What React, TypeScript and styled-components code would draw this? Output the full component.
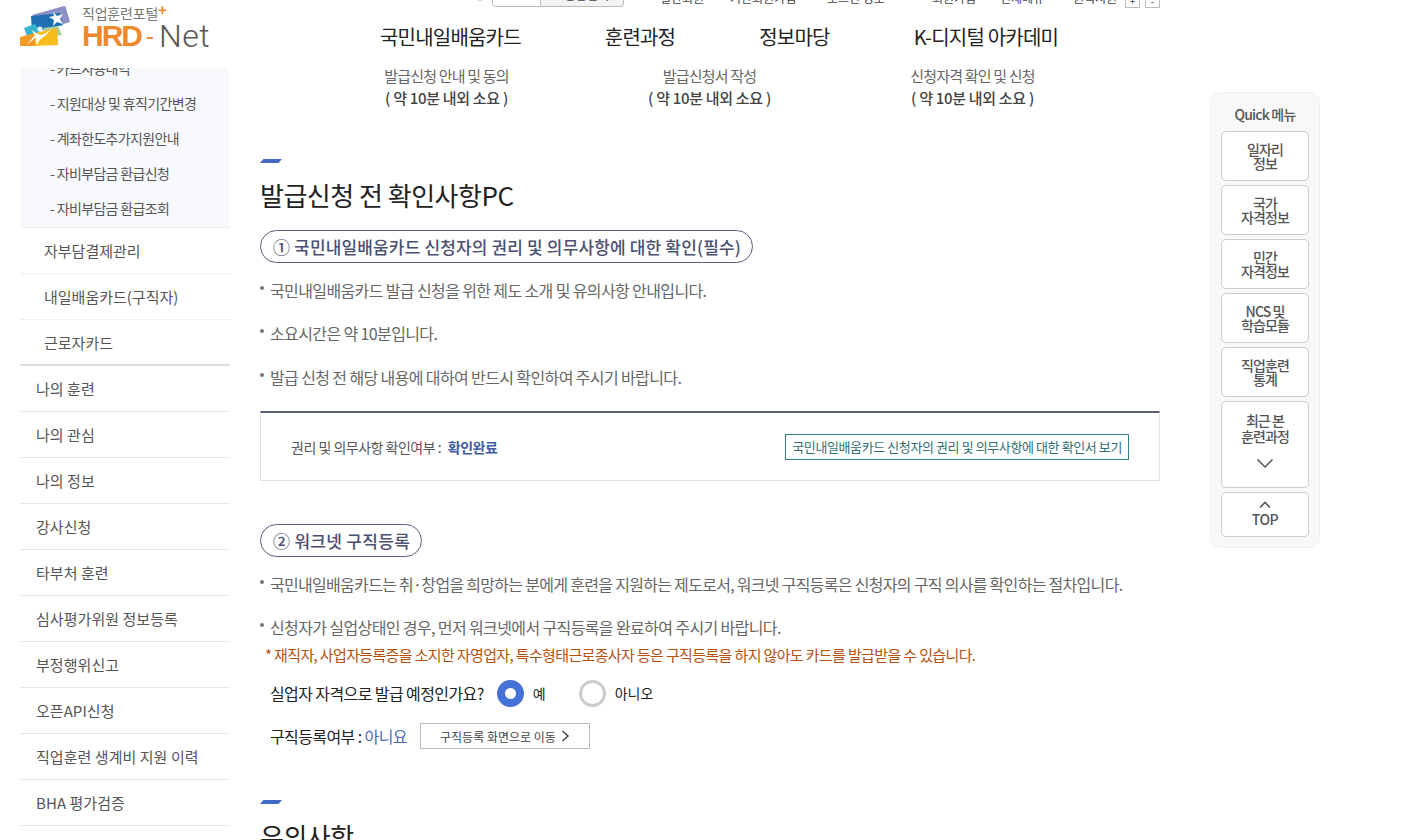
import React from 'react'
import styled, { createGlobalStyle } from 'styled-components'

const Global = createGlobalStyle`
  html, body {
    margin: 0;
    padding: 0;
    height: 100%;
    overflow: hidden;
    background: #fff;
    font-family: "Noto Sans CJK KR", "Noto Sans", sans-serif;
  }
  * { box-sizing: border-box; }
`

const subItems = ['- 카드사용내역', '- 지원대상 및 휴직기간변경', '- 계좌한도추가지원안내', '- 자비부담금 환급신청', '- 자비부담금 환급조회']
const depthItems = ['자부담결제관리', '내일배움카드(구직자)', '근로자카드']
const menuItems = ['나의 훈련', '나의 관심', '나의 정보', '강사신청', '타부처 훈련', '심사평가위원 정보등록', '부정행위신고', '오픈API신청', '직업훈련 생계비 지원 이력', 'BHA 평가검증']
const navItems = ['국민내일배움카드', '훈련과정', '정보마당', 'K-디지털 아카데미']
const utilItems = [
  { label: '일반회원', w: 70 },
  { label: '기관회원가입', w: 97 },
  { label: '로그인 정보', w: 105 },
  { label: '회원가입', w: 68 },
  { label: '전체메뉴', w: 73 },
  { label: '원격지원', w: 52 },
]
const quickItems = [['일자리', '정보'], ['국가', '자격정보'], ['민간', '자격정보'], ['NCS 및', '학습모듈'], ['직업훈련', '통계']]

const Logo = () => (
  <svg width="50" height="40" viewBox="0 0 50 40">
    <path d="M12 9 L44 0 Q46 0 46 2 L50 16 L30 22 Z" fill="#8c90c6" />
    <path d="M11 10 L40 7 L43 19 L12 27 Z" fill="#1f6fb5" />
    <path d="M4 22 L15 18 L23 29 L7 30 Z" fill="#35b6cf" />
    <path d="M23 22 L38 20 L42 29 L28 31 Z" fill="#a6cf9c" />
    <path d="M0 31 L15 27 L15 40 L0 40 Z" fill="#f39a25" />
    <path d="M15 27 L37 22 L38 39 L15 40 Z" fill="#f6bd1d" />
    <path d="M33 6 L37 10 L43 8 L40 13 L43 18 L37 16 L33 20 L34 14 L29 11 L34 10 Z" fill="#fff" />
    <path d="M12 24 Q16 28 20 29 Q27 28 32 22 Q27 29 22 32 Q18 35 17 39 Q15 35 16 31 Q12 35 7 38 Q12 33 15 29 Q13 27 12 24 Z" fill="#fff" />
    <circle cx="20" cy="23" r="2.6" fill="#e8f2f5" />
  </svg>
)

const App = () => {
  return (
    <Page>
      <Global />
      <Header>
        <LogoLink>
          <Logo />
          <LogoText>
            <Portal>직업훈련포털<b>+</b></Portal>
            <Brand><strong>HRD</strong><em>-</em><span>Net</span></Brand>
          </LogoText>
        </LogoLink>
        <HeaderRight>
          <UtilBar>
            <SearchDot />
            <SearchInput />
            <SearchBtn>통합검색</SearchBtn>
            {utilItems.map((u) => <UtilLink key={u.label} $w={u.w}>{u.label}</UtilLink>)}
            <SizeBtn>+</SizeBtn>
            <SizeBtn>-</SizeBtn>
          </UtilBar>
          <Nav>
            {navItems.map((n) => <NavItem key={n}>{n}</NavItem>)}
          </Nav>
        </HeaderRight>
      </Header>
      <Body>
        <Sidebar>
          <SubBox>
            {subItems.map((s) => <SubItem key={s}>{s}</SubItem>)}
          </SubBox>
          {depthItems.map((d) => <DepthItem key={d}>{d}</DepthItem>)}
          <DepthEnd />
          {menuItems.map((m) => <MenuItem key={m}>{m}</MenuItem>)}
        </Sidebar>
        <Content>
          <Steps>
            <Step>발급신청 안내 및 동의<b>( 약 10분 내외 소요 )</b></Step>
            <Step>발급신청서 작성<b>( 약 10분 내외 소요 )</b></Step>
            <Step>신청자격 확인 및 신청<b>( 약 10분 내외 소요 )</b></Step>
          </Steps>
          <Accent />
          <Title>발급신청 전 확인사항PC</Title>
          <Pill>① 국민내일배움카드 신청자의 권리 및 의무사항에 대한 확인(필수)</Pill>
          <Bullets>
            <Bullet>국민내일배움카드 발급 신청을 위한 제도 소개 및 유의사항 안내입니다.</Bullet>
            <Bullet>소요시간은 약 10분입니다.</Bullet>
            <Bullet>발급 신청 전 해당 내용에 대하여 반드시 확인하여 주시기 바랍니다.</Bullet>
          </Bullets>
          <CheckBox>
            <CheckLabel>권리 및 의무사항 확인여부 : <b>확인완료</b></CheckLabel>
            <OutlineBtn>국민내일배움카드 신청자의 권리 및 의무사항에 대한 확인서 보기</OutlineBtn>
          </CheckBox>
          <Pill $second>② 워크넷 구직등록</Pill>
          <Bullets>
            <Bullet $tight>국민내일배움카드는 취·창업을 희망하는 분에게 훈련을 지원하는 제도로서, 워크넷 구직등록은 신청자의 구직 의사를 확인하는 절차입니다.</Bullet>
            <Bullet>신청자가 실업상태인 경우, 먼저 워크넷에서 구직등록을 완료하여 주시기 바랍니다.</Bullet>
          </Bullets>
          <Notice>* 재직자, 사업자등록증을 소지한 자영업자, 특수형태근로종사자 등은 구직등록을 하지 않아도 카드를 발급받을 수 있습니다.</Notice>
          <RadioRow>
            <Question>실업자 자격으로 발급 예정인가요?</Question>
            <Radio $checked />
            <RadioLabel>예</RadioLabel>
            <Radio />
            <RadioLabel>아니오</RadioLabel>
          </RadioRow>
          <StatusRow>
            <Question>구직등록여부 : <Blue>아니요</Blue></Question>
            <MoveBtn>
              구직등록 화면으로 이동
              <svg width="9" height="12" viewBox="0 0 9 12"><path d="M1.5 1 L7 6 L1.5 11" fill="none" stroke="#444" strokeWidth="1.5" /></svg>
            </MoveBtn>
          </StatusRow>
          <Accent />
          <Title>유의사항</Title>
        </Content>
        <QuickCol>
          <Quick>
            <QuickTitle>Quick 메뉴</QuickTitle>
            {quickItems.map(([a, b]) => (
              <QuickBtn key={a}>{a}<br />{b}</QuickBtn>
            ))}
            <RecentBtn>
              최근 본<br />훈련과정
              <svg width="18" height="11" viewBox="0 0 18 11"><path d="M1.5 1.5 L9 9 L16.5 1.5" fill="none" stroke="#555" strokeWidth="1.5" /></svg>
            </RecentBtn>
            <TopBtn>
              <svg width="12" height="8" viewBox="0 0 12 8"><path d="M1 6.5 L6 1.5 L11 6.5" fill="none" stroke="#555" strokeWidth="1.6" /></svg>
              TOP
            </TopBtn>
          </Quick>
        </QuickCol>
      </Body>
    </Page>
  )
}

export default App

const Page = styled.div`
  width: 1407px;
  height: 840px;
  overflow: hidden;
`
const Header = styled.header`
  height: 68px;
  display: flex;
  background: #fff;
  overflow: hidden;
`
const LogoLink = styled.div`
  width: 360px;
  padding: 6px 0 0 20px;
  display: flex;
  align-items: flex-start;
  gap: 12px;
`
const LogoText = styled.div`
  display: flex;
  flex-direction: column;
  margin-top: -1px;
`
const Portal = styled.div`
  font-size: 14px;
  line-height: 16px;
  letter-spacing: -0.2px;
  color: #777;
  white-space: nowrap;
  b { color: #f08a24; font-weight: 700; font-size: 15px; line-height: 10px; vertical-align: 3px; }
`
const Brand = styled.div`
  display: flex;
  align-items: center;
  height: 30px;
  font-family: "Liberation Sans", sans-serif;
  font-size: 30px;
  line-height: 30px;
  strong { color: #ee8a2d; font-weight: 700; letter-spacing: -2px; }
  em { color: #ee8a2d; font-style: normal; margin: 0 5px 0 5px; font-size: 24px; }
  span { font-family: Roboto, sans-serif; font-weight: 300; font-size: 32px; letter-spacing: 0.5px; color: #555; }
`
const HeaderRight = styled.div`
  flex: 1;
  display: flex;
  flex-direction: column;
`
const UtilBar = styled.div`
  height: 22px;
  margin-top: -15px;
  display: flex;
  align-items: center;
  padding-left: 115px;
  font-size: 12px;
  color: #444;
`
const SearchDot = styled.i`
  width: 10px;
  height: 10px;
  margin-right: 7px;
  border-radius: 50%;
  background: #ddd;
`
const SearchInput = styled.div`
  width: 49px;
  height: 22px;
  border: 1px solid #bbb;
  border-radius: 4px 0 0 4px;
`
const SearchBtn = styled.div`
  width: 83px;
  height: 22px;
  margin-right: 36px;
  padding: 0 14px 0 0;
  border: 1px solid #bbb;
  border-left: 0;
  border-radius: 0 4px 4px 0;
  background: #f3f3f3;
  text-align: right;
  font-size: 12px;
`
const UtilLink = styled.span<{ $w: number }>`
  width: ${(p) => p.$w}px;
  padding-top: 2px;
  white-space: nowrap;
`
const SizeBtn = styled.span`
  width: 15px;
  height: 15px;
  margin-top: 8px;
  margin-right: 5px;
  border: 1px solid #bbb;
  font-size: 10px;
  line-height: 13px;
  text-align: center;
`
const Nav = styled.nav`
  display: flex;
  gap: 84px;
  padding: 15px 0 0 20px;
`
const NavItem = styled.div`
  font-size: 20px;
  line-height: 30px;
  letter-spacing: -0.8px;
  color: #222;
  white-space: nowrap;
`
const Body = styled.div`
  display: flex;
  height: 772px;
  overflow: hidden;
`
const Sidebar = styled.aside`
  width: 210px;
  margin: -17px 0 0 20px;
  flex: none;
`
const SubBox = styled.div`
  height: 177px;
  background: #f8f9fd;
  border-bottom: 1px solid #eee;
`
const SubItem = styled.div`
  height: 35px;
  padding-left: 30px;
  font-size: 14px;
  line-height: 35px;
  letter-spacing: -0.65px;
  color: #555;
`
const DepthItem = styled.div`
  height: 46px;
  padding-left: 24px;
  font-size: 15px;
  line-height: 45px;
  letter-spacing: 0;
  color: #555;
  border-bottom: 1px solid #f0f0f0;
`
const DepthEnd = styled.div`
  height: 2px;
  margin-top: -2px;
  background: #ddd;
`
const MenuItem = styled.div`
  height: 46px;
  padding-left: 16px;
  font-size: 15px;
  line-height: 46px;
  letter-spacing: 0.05px;
  color: #555;
  border-bottom: 1px solid #e8e8e8;
`
const Content = styled.main`
  width: 900px;
  margin-left: 30px;
  flex: none;
`
const Steps = styled.div`
  display: grid;
  grid-template-columns: repeat(3, 263px);
  margin-top: -3px;
  padding-left: 55px;
`
const Step = styled.div`
  text-align: center;
  font-size: 15px;
  line-height: 22px;
  letter-spacing: -0.8px;
  color: #666;
  b {
    display: block;
    font-weight: 500;
    letter-spacing: -0.3px;
    color: #444;
  }
`
const Accent = styled.div`
  width: 22px;
  height: 4px;
  margin-top: 50px;
  background: #4169c6;
  clip-path: polygon(16% 0, 100% 0, 84% 100%, 0 100%);
  & ~ & { margin-top: 51px; }
`
const Title = styled.h2`
  margin: 14px 0 0;
  font-size: 26px;
  font-weight: 400;
  line-height: 36px;
  letter-spacing: -0.5px;
  color: #222;
`
const Pill = styled.div<{ $second?: boolean }>`
  display: inline-flex;
  align-items: center;
  height: 33px;
  margin-top: ${(p) => (p.$second ? '43px' : '17px')};
  padding: 0 11px 0 12px;
  border: 1px solid #5a5f7d;
  border-radius: 17px;
  font-size: 17px;
  font-weight: 500;
  letter-spacing: ${(p) => (p.$second ? '0.3px' : '0.15px')};
  color: #4b5072;
  white-space: nowrap;
`
const Bullets = styled.ul`
  list-style: none;
  margin: 0;
  padding: 5.5px 0 0;
`
const Bullet = styled.li<{ $tight?: boolean }>`
  position: relative;
  height: 43.5px;
  padding-left: 10px;
  font-size: 16px;
  line-height: 43px;
  letter-spacing: ${(p) => (p.$tight ? '-0.7px' : '-0.62px')};
  color: #666;
  white-space: nowrap;
  &::before {
    content: '';
    position: absolute;
    left: 0;
    top: 17px;
    width: 4px;
    height: 4px;
    border-radius: 50%;
    background: #777;
  }
`
const CheckBox = styled.div`
  height: 70px;
  margin-top: 12px;
  padding: 0 30px;
  display: flex;
  align-items: center;
  justify-content: space-between;
  border: 1px solid #e2e2e2;
  border-top: 2px solid #5a6078;
`
const CheckLabel = styled.div`
  font-size: 14px;
  letter-spacing: -0.5px;
  color: #555;
  b { margin-left: 4px; font-weight: 700; color: #3f5ca8; }
`
const OutlineBtn = styled.div`
  height: 26px;
  padding: 0 6px;
  border: 1px solid #2f7d80;
  font-size: 13px;
  line-height: 24px;
  letter-spacing: -0.4px;
  color: #2f6f72;
  white-space: nowrap;
`
const Notice = styled.div`
  margin-top: -5.5px;
  padding-left: 5px;
  font-size: 15px;
  line-height: 22px;
  letter-spacing: -0.64px;
  color: #b5500f;
  white-space: nowrap;
`
const RadioRow = styled.div`
  display: flex;
  align-items: center;
  height: 30px;
  margin-top: 12px;
  padding-left: 10px;
`
const Question = styled.div`
  font-size: 16px;
  letter-spacing: -0.6px;
  color: #222;
  white-space: nowrap;
`
const Radio = styled.span<{ $checked?: boolean }>`
  width: 27px;
  height: 27px;
  margin-left: 13px;
  border-radius: 50%;
  background: #fff;
  border: ${(p) => (p.$checked ? '8px solid #4472d6' : '3px solid #ccc')};
`
const RadioLabel = styled.span`
  width: 33px;
  margin-left: 9px;
  font-size: 14px;
  color: #222;
  white-space: nowrap;
`
const StatusRow = styled.div`
  display: flex;
  align-items: center;
  margin-top: 15px;
  padding-left: 10px;
  gap: 13px;
`
const Blue = styled.span`
  color: #4a6bb5;
`
const MoveBtn = styled.div`
  width: 170px;
  height: 26px;
  display: flex;
  align-items: center;
  justify-content: center;
  gap: 5px;
  border: 1px solid #bbb;
  font-size: 12px;
  color: #444;
  white-space: nowrap;
`
const QuickCol = styled.div`
  margin-left: 50px;
  padding-top: 24px;
  flex: none;
`
const Quick = styled.div`
  width: 110px;
  height: 456px;
  padding: 9px 10px 0;
  display: flex;
  flex-direction: column;
  gap: 4px;
  background: #f8f8f8;
  border: 1px solid #f0f0f0;
  border-radius: 10px;
`
const QuickTitle = styled.div`
  height: 25px;
  text-align: center;
  font-size: 14px;
  line-height: 24px;
  font-weight: 500;
  letter-spacing: -0.8px;
  color: #555;
`
const QuickBtn = styled.div`
  height: 50px;
  padding-top: 10px;
  text-align: center;
  background: #fff;
  border: 1px solid #ccc;
  border-radius: 5px;
  font-size: 14px;
  line-height: 14px;
  font-weight: 500;
  letter-spacing: -0.9px;
  color: #555;
`
const RecentBtn = styled(QuickBtn)`
  height: 87px;
  padding-top: 10px;
  line-height: 16px;
  svg { display: block; margin: 14px auto 0; }
`
const TopBtn = styled(QuickBtn)`
  height: 45px;
  padding-top: 8px;
  line-height: 20px;
  letter-spacing: -0.5px;
  svg { display: block; margin: 0 auto; }
`
